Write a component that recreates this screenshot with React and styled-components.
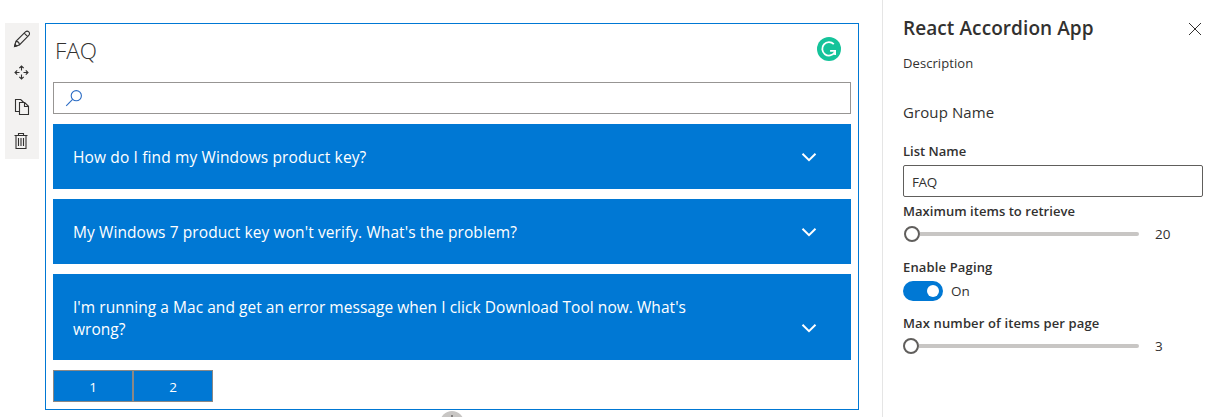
import React from "react";
import styled, { createGlobalStyle } from "styled-components";

const Global = createGlobalStyle`
  * { box-sizing: border-box; }
  html, body { margin: 0; height: 100%; overflow: hidden; background: #fff; }
  body {
    font-family: "Open Sans", "Noto Sans", sans-serif;
    color: #323130;
  }
  button, input { font: inherit; color: inherit; }
`;

const Page = styled.div`
  display: flex;
  width: 1219px;
  height: 417px;
  overflow: hidden;
`;

const Canvas = styled.main`
  display: flex;
  flex-direction: column;
  width: 882px;
  padding: 23px 23px 0 5px;
`;

const WebPart = styled.div`
  display: flex;
  align-items: flex-start;
  gap: 6px;
`;

const Toolbar = styled.div`
  display: flex;
  flex-direction: column;
  width: 34px;
  background: #f3f2f1;
`;

const ToolButton = styled.button`
  display: flex;
  align-items: center;
  justify-content: center;
  width: 34px;
  height: 34px;
  padding: 0 ${(p) => p.$nudge || 0}px 2px 0;
  border: 0;
  background: transparent;
`;

const Card = styled.section`
  display: flex;
  flex-direction: column;
  width: 814px;
  height: 387px;
  padding: 0 7px;
  border: 1px solid #0078d4;
`;

const CardHeader = styled.header`
  display: flex;
  align-items: center;
  justify-content: space-between;
  height: 58px;
  padding: 0 10px 8px 2px;
`;

const CardTitle = styled.h2`
  margin: 0;
  padding-top: 3px;
  font-size: 22.5px;
  font-weight: 300;
  line-height: 30px;
`;

const SearchBox = styled.div`
  display: flex;
  align-items: center;
  height: 32px;
  padding-left: 11px;
  border: 1px solid #979593;
`;

const Accordion = styled.div`
  display: flex;
  flex-direction: column;
  gap: 10px;
  margin: 10px 0;
`;

const AccordionItem = styled.button`
  display: flex;
  align-items: ${(p) => (p.$tall ? "flex-end" : "center")};
  justify-content: space-between;
  height: ${(p) => (p.$tall ? 86 : 65)}px;
  padding: ${(p) => (p.$tall ? "0 34px 20px 20px" : "1px 34px 0 20px")};
  border: 0;
  background: #0078d4;
  color: #fff;
  text-align: left;
`;

const Question = styled.span`
  font-size: 15.5px;
  line-height: 22px;
  letter-spacing: ${(p) => p.$track || 0}px;
  white-space: pre-line;
`;

const ChevronSlot = styled.span`
  display: flex;
  align-items: center;
  height: 24px;
`;

const Pager = styled.nav`
  display: flex;
`;

const PageButton = styled.button`
  width: 80px;
  height: 32px;
  padding: 1px 0 0;
  border: 1px solid #8a8886;
  background: #0078d4;
  color: #fff;
  font-size: 13.5px;
`;

const AddButton = styled.button`
  display: flex;
  align-items: flex-start;
  justify-content: center;
  flex-shrink: 0;
  width: 24px;
  height: 24px;
  margin: 1px 0 0 435px;
  padding: 4px 0 0;
  border: 0;
  border-radius: 50%;
  background: #c8c6c4;
`;

const Panel = styled.aside`
  display: flex;
  flex-direction: column;
  width: 337px;
  padding: 14px 16px 0 20px;
  border-left: 1px solid #e5e5e5;
`;

const PanelHeader = styled.header`
  display: flex;
  align-items: center;
  justify-content: space-between;
  height: 28px;
`;

const PanelTitle = styled.h1`
  margin: 0;
  font-size: 19px;
  font-weight: 600;
  line-height: 28px;
  letter-spacing: 0.08px;
`;

const CloseButton = styled.button`
  display: flex;
  padding: 0;
  margin: 1px 1px 0 0;
  border: 0;
  background: transparent;
`;

const Description = styled.p`
  margin: 11px 0 0;
  font-size: 13px;
  line-height: 20px;
  letter-spacing: 0.08px;
`;

const GroupName = styled.h3`
  margin: 27px 0 17px;
  font-size: 15px;
  font-weight: 400;
  line-height: 24px;
  letter-spacing: 0.1px;
`;

const Label = styled.label`
  display: block;
  height: 20px;
  margin-top: ${(p) => p.$top || 0}px;
  font-size: 13px;
  font-weight: 600;
  line-height: 20px;
  letter-spacing: ${(p) => p.$track || 0}px;
`;

const TextField = styled.input`
  width: 300px;
  height: 32px;
  margin-top: 4px;
  padding: 2px 8px 0;
  border: 1px solid #605e5c;
  border-radius: 2px;
  background: #fff;
  font-size: 13.5px;
  letter-spacing: -0.4px;
  outline: 0;
`;

const SliderRow = styled.div`
  display: flex;
  align-items: center;
  gap: 16px;
  height: 24px;
  margin-top: 1px;
  padding-left: ${(p) => p.$inset || 0}px;
`;

const Track = styled.div`
  display: flex;
  align-items: center;
  flex: 0 0 ${(p) => 236 - (p.$inset || 0)}px;
`;

const Thumb = styled.span`
  width: 16px;
  height: 16px;
  border: 2px solid #605e5c;
  border-radius: 50%;
  background: #fff;
`;

const Rail = styled.span`
  flex: 1;
  height: 4px;
  border-radius: 0 2px 2px 0;
  background: #c8c6c4;
`;

const SliderValue = styled.span`
  font-size: 13.5px;
  font-weight: ${(p) => p.$weight || 500};
  line-height: 20px;
`;

const ToggleRow = styled.div`
  display: flex;
  align-items: center;
  gap: 8px;
  height: 20px;
  margin-top: 4px;
  font-size: 13.5px;
`;

const Toggle = styled.button`
  display: flex;
  align-items: center;
  justify-content: flex-end;
  width: 40px;
  height: 20px;
  padding: 0 4px;
  border: 0;
  border-radius: 10px;
  background: #0078d4;
`;

const Knob = styled.span`
  width: 12px;
  height: 12px;
  border-radius: 50%;
  background: #fff;
`;

const Glyph = ({ size = 16, w = 1, color = "#323130", children, ...rest }) => (
  <svg width={size} height={size} viewBox={`0 0 ${size} ${size}`} fill="none" stroke={color} strokeWidth={w} {...rest}>
    {children}
  </svg>
);

const PencilIcon = () => (
  <Glyph size={18} w={1.1}>
    <path d="M1.6 16.4l1.3-5L12.4 1.9a2.3 2.3 0 0 1 3.4 3.4L6.4 14.9zM2.9 11.4c1.9 0 3.4 1.5 3.5 3.5M11.2 3.1l3.5 3.5" />
    <path d="M1.6 16.4l.5-2 1.5 1.5z" fill="#323130" />
  </Glyph>
);

const MoveIcon = () => (
  <Glyph size={16} w={1.1}>
    <path d="M7.5 1.5v4M7.5 9.5v4M1.5 7.5h4M9.5 7.5h4M5.3 3.2L7.5 1l2.2 2.2M5.3 11.8L7.5 14l2.2-2.2M3.2 5.3L1 7.5l2.2 2.2M11.8 5.3L14 7.5l-2.2 2.2" />
  </Glyph>
);

const CopyIcon = () => (
  <Glyph size={16} w={1.1}>
    <path d="M5.5 12.5h-4v-12h5.2l3 3M5.5 3.5h5.2l3.8 3.8v8.2h-9zM10.5 3.5v4h4" />
  </Glyph>
);

const TrashIcon = () => (
  <Glyph size={16} w={1.1}>
    <path d="M1.5 2.5h13M5.5 2.5v-2h5v2M3 2.5v13h10v-13M5.5 5v8M8 5v8M10.5 5v8" />
  </Glyph>
);

const SearchIcon = () => (
  <Glyph size={18} w={1.1} color="#2b6cc4">
    <circle cx="11.3" cy="6.7" r="5.1" />
    <path d="M7.6 10.4L1.2 16.8" />
  </Glyph>
);

const GrammarBadge = () => (
  <svg width="24" height="24" viewBox="0 0 24 24" fill="none">
    <circle cx="12" cy="12" r="12" fill="#15c39a" />
    <path d="M16.8 7.2A6.7 6.7 0 1 0 17.6 15.5M18.1 18v-4.1h-5" stroke="#fff" strokeWidth="1.8" />
  </svg>
);

const ChevronIcon = () => (
  <Glyph size={16} w={2} color="#fff">
    <path d="M1.5 4.8L8 11.2l6.5-6.4" />
  </Glyph>
);

const CloseIcon = () => (
  <Glyph size={14}>
    <path d="M1 1l12 12M13 1L1 13" />
  </Glyph>
);

const PlusIcon = () => (
  <Glyph size={12} w={1.3} color="#605e5c">
    <path d="M6 0v12M0 6h12" />
  </Glyph>
);

const tools = [
  ["Edit", PencilIcon, 0],
  ["Move", MoveIcon, 0],
  ["Duplicate", CopyIcon, 0],
  ["Delete", TrashIcon, 2],
];

const questions = [
  { text: "How do I find my Windows product key?", track: 0.13 },
  { text: "My Windows 7 product key won't verify. What's the problem?", track: 0.09 },
  {
    text: "I'm running a Mac and get an error message when I click Download Tool now. What's\nwrong?",
    tall: true,
    track: 0.04,
  },
];

export default function App() {
  return (
    <Page>
      <Global />
      <Canvas>
        <WebPart>
          <Toolbar>
            {tools.map(([name, Icon, nudge]) => (
              <ToolButton key={name} aria-label={name} $nudge={nudge}>
                <Icon />
              </ToolButton>
            ))}
          </Toolbar>
          <Card>
            <CardHeader>
              <CardTitle>FAQ</CardTitle>
              <GrammarBadge />
            </CardHeader>
            <SearchBox>
              <SearchIcon />
            </SearchBox>
            <Accordion>
              {questions.map((q) => (
                <AccordionItem key={q.text} $tall={q.tall}>
                  <Question $track={q.track}>{q.text}</Question>
                  <ChevronSlot>
                    <ChevronIcon />
                  </ChevronSlot>
                </AccordionItem>
              ))}
            </Accordion>
            <Pager>
              <PageButton>1</PageButton>
              <PageButton>2</PageButton>
            </Pager>
          </Card>
        </WebPart>
        <AddButton aria-label="Add">
          <PlusIcon />
        </AddButton>
      </Canvas>
      <Panel>
        <PanelHeader>
          <PanelTitle>React Accordion App</PanelTitle>
          <CloseButton aria-label="Close">
            <CloseIcon />
          </CloseButton>
        </PanelHeader>
        <Description>Description</Description>
        <GroupName>Group Name</GroupName>
        <Label>List Name</Label>
        <TextField defaultValue="FAQ" />
        <Label $top={4} $track={0.04}>Maximum items to retrieve</Label>
        <SliderRow $inset={1}>
          <Track $inset={1}>
            <Thumb />
            <Rail />
          </Track>
          <SliderValue>20</SliderValue>
        </SliderRow>
        <Label $top={11} $track={0.15}>Enable Paging</Label>
        <ToggleRow>
          <Toggle role="switch" aria-checked="true">
            <Knob />
          </Toggle>
          <span>On</span>
        </ToggleRow>
        <Label $top={12} $track={0.13}>Max number of items per page</Label>
        <SliderRow>
          <Track>
            <Thumb />
            <Rail />
          </Track>
          <SliderValue $weight={400}>3</SliderValue>
        </SliderRow>
      </Panel>
    </Page>
  );
}
